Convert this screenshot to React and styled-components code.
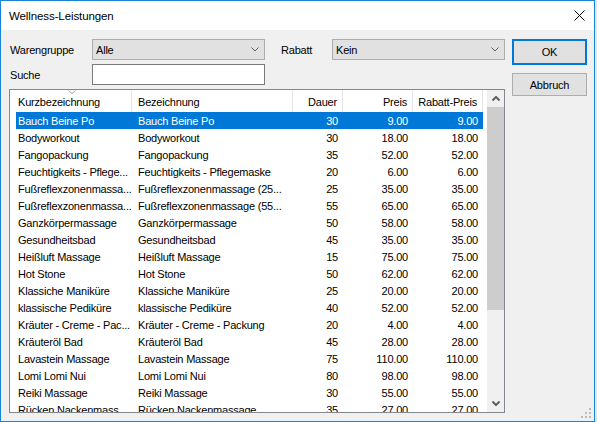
import React from 'react';
import styled, { createGlobalStyle } from 'styled-components';

const GlobalStyle = createGlobalStyle`
  html, body { margin: 0; padding: 0; }
  body {
    background: #dfe6ee;
    font-family: "Liberation Sans", Arial, sans-serif;
    font-size: 11px;
    letter-spacing: -0.2px;
    color: #000;
  }
`;

const rows = [
  ['Bauch Beine Po', 'Bauch Beine Po', '30', '9.00', '9.00'],
  ['Bodyworkout', 'Bodyworkout', '30', '18.00', '18.00'],
  ['Fangopackung', 'Fangopackung', '35', '52.00', '52.00'],
  ['Feuchtigkeits - Pflege...', 'Feuchtigkeits - Pflegemaske', '20', '6.00', '6.00'],
  ['Fußreflexzonenmassa...', 'Fußreflexzonenmassage (25...', '25', '35.00', '35.00'],
  ['Fußreflexzonenmassa...', 'Fußreflexzonenmassage (55...', '55', '65.00', '65.00'],
  ['Ganzkörpermassage', 'Ganzkörpermassage', '50', '58.00', '58.00'],
  ['Gesundheitsbad', 'Gesundheitsbad', '45', '35.00', '35.00'],
  ['Heißluft Massage', 'Heißluft Massage', '15', '75.00', '75.00'],
  ['Hot Stone', 'Hot Stone', '50', '62.00', '62.00'],
  ['Klassiche Maniküre', 'Klassiche Maniküre', '25', '20.00', '20.00'],
  ['klassische Pediküre', 'klassische Pediküre', '40', '52.00', '52.00'],
  ['Kräuter - Creme - Pac...', 'Kräuter - Creme - Packung', '20', '4.00', '4.00'],
  ['Kräuteröl Bad', 'Kräuteröl Bad', '45', '28.00', '28.00'],
  ['Lavastein Massage', 'Lavastein Massage', '75', '110.00', '110.00'],
  ['Lomi Lomi Nui', 'Lomi Lomi Nui', '80', '98.00', '98.00'],
  ['Reiki Massage', 'Reiki Massage', '30', '55.00', '55.00'],
  ['Rücken Nackenmass...', 'Rücken Nackenmassage', '35', '27.00', '27.00'],
];

const Window = styled.div`
  position: relative;
  width: 595px;
  height: 422px;
  box-sizing: border-box;
  border: 1px solid #1883d7;
  background: #f0f0f0;
  display: flex;
  flex-direction: column;
`;

const TitleBar = styled.div`
  height: 29px;
  background: #fff;
  display: flex;
  align-items: center;
  justify-content: space-between;
  padding: 0 9px 0 8px;
`;

const Title = styled.span`
  font-size: 11.5px;
  letter-spacing: -0.1px;
`;

const Body = styled.div`
  flex: 1;
  display: flex;
  gap: 7px;
  padding: 9px 0 8px 8px;
`;

const LeftCol = styled.div`
  width: 496px;
  display: flex;
  flex-direction: column;
  gap: 4px;
`;

const FormRow = styled.div`
  display: flex;
  align-items: center;
  height: 21px;
`;

const Label = styled.span`
  width: ${p => p.$w}px;
  margin-left: ${p => p.$ml || 0}px;
  padding-left: 1px;
  box-sizing: border-box;
`;

const Combo = styled.div`
  width: 173px;
  height: 21px;
  box-sizing: border-box;
  border: 1px solid #adadad;
  background: #e1e1e1;
  display: flex;
  align-items: center;
  justify-content: space-between;
  padding: 0 5px 0 3px;
`;

const Input = styled.div`
  width: 173px;
  height: 21px;
  box-sizing: border-box;
  border: 1px solid #7a7a7a;
  background: #fff;
`;

const ListBox = styled.div`
  height: 324px;
  box-sizing: border-box;
  border: 1px solid #828790;
  background: #fff;
  display: flex;
`;

const ListContent = styled.div`
  flex: 1;
  overflow: hidden;
  display: flex;
  flex-direction: column;
`;

const Header = styled.div`
  position: relative;
  height: 22px;
  flex: none;
  display: grid;
  grid-template-columns: 122px 161px 50px 70px 70px 1fr;
`;

const HeadCell = styled.div`
  display: flex;
  align-items: center;
  padding-top: 1px;
  justify-content: ${p => (p.$right ? 'flex-end' : 'flex-start')};
  padding-left: ${p => p.$pl || 0}px;
  padding-right: ${p => (p.$right ? 5 : 0)}px;
  border-right: ${p => (p.$last ? 'none' : '1px solid #e5e5e5')};
  white-space: nowrap;
`;

const SortMark = styled.svg`
  position: absolute;
  left: 58px;
  top: 0;
`;

const Row = styled.div`
  height: 17px;
  flex: none;
  width: 467px;
  margin-left: 6px;
  display: grid;
  grid-template-columns: 116px 161px 50px 70px 70px;
  align-items: center;
  background: ${p => (p.$selected ? '#0078d7' : 'transparent')};
  color: ${p => (p.$selected ? '#fff' : '#000')};
`;

const Cell = styled.div`
  white-space: nowrap;
  text-align: ${p => (p.$right ? 'right' : 'left')};
  padding-left: ${p => p.$pl || 0}px;
  padding-right: ${p => (p.$right ? 5 : 0)}px;
`;

const ScrollBar = styled.div`
  width: 17px;
  background: #f0f0f0;
  display: flex;
  flex-direction: column;
`;

const ScrollBtn = styled.div`
  height: 17px;
  flex: none;
  display: flex;
  align-items: center;
  justify-content: center;
`;

const Thumb = styled.div`
  height: 203px;
  background: #cdcdcd;
`;

const Spacer = styled.div`
  flex: 1;
`;

const ButtonCol = styled.div`
  width: 75px;
  display: flex;
  flex-direction: column;
  gap: 8px;
`;

const Button = styled.div`
  height: ${p => (p.$default ? 26 : 23)}px;
  box-sizing: border-box;
  border: ${p => (p.$default ? '2px solid #0078d7' : '1px solid #adadad')};
  background: #e1e1e1;
  display: flex;
  align-items: center;
  justify-content: center;
`;

const Grip = styled.svg`
  position: absolute;
  right: 2px;
  bottom: 2px;
`;

const Chevron = ({ up, color = '#606060', sw = 1 }) => (
  <svg width="8" height="5" viewBox="0 0 8 5">
    <path d={up ? 'M0.5 4.5 L4 1 L7.5 4.5' : 'M0.5 0.5 L4 4 L7.5 0.5'} fill="none" stroke={color} strokeWidth={sw} />
  </svg>
);

export default function App() {
  return (
    <>
      <GlobalStyle />
      <Window>
        <TitleBar>
          <Title>Wellness-Leistungen</Title>
          <svg width="11" height="11" viewBox="0 0 11 11">
            <path d="M0.5 0.5 L10.5 10.5 M10.5 0.5 L0.5 10.5" stroke="#000" strokeWidth="1" />
          </svg>
        </TitleBar>
        <Body>
          <LeftCol>
            <FormRow>
              <Label $w={83}>Warengruppe</Label>
              <Combo>
                <span>Alle</span>
                <Chevron />
              </Combo>
              <Label $w={52} $ml={15}>Rabatt</Label>
              <Combo>
                <span>Kein</span>
                <Chevron />
              </Combo>
            </FormRow>
            <FormRow>
              <Label $w={83}>Suche</Label>
              <Input />
            </FormRow>
            <ListBox>
              <ListContent>
                <Header>
                  <HeadCell $pl={8}>Kurzbezeichnung</HeadCell>
                  <HeadCell $pl={6}>Bezeichnung</HeadCell>
                  <HeadCell $right>Dauer</HeadCell>
                  <HeadCell $right>Preis</HeadCell>
                  <HeadCell $right>Rabatt-Preis</HeadCell>
                  <HeadCell $last />
                  <SortMark width="8" height="4" viewBox="0 0 8 4">
                    <path d="M0.5 0.5 L4 3.5 L7.5 0.5" fill="none" stroke="#a0a0a0" strokeWidth="1" />
                  </SortMark>
                </Header>
                {rows.map((r, i) => (
                  <Row key={i} $selected={i === 0}>
                    <Cell $pl={2}>{r[0]}</Cell>
                    <Cell $pl={6}>{r[1]}</Cell>
                    <Cell $right>{r[2]}</Cell>
                    <Cell $right>{r[3]}</Cell>
                    <Cell $right>{r[4]}</Cell>
                  </Row>
                ))}
              </ListContent>
              <ScrollBar>
                <ScrollBtn>
                  <Chevron up sw={2} />
                </ScrollBtn>
                <Thumb />
                <Spacer />
                <ScrollBtn>
                  <Chevron sw={2} />
                </ScrollBtn>
              </ScrollBar>
            </ListBox>
          </LeftCol>
          <ButtonCol>
            <Button $default>OK</Button>
            <Button>Abbruch</Button>
          </ButtonCol>
        </Body>
        <Grip width="11" height="11" viewBox="0 0 11 11">
          <g fill="#bcbcbc">
            <rect x="8" y="0" width="2" height="2" />
            <rect x="4" y="4" width="2" height="2" />
            <rect x="8" y="4" width="2" height="2" />
            <rect x="0" y="8" width="2" height="2" />
            <rect x="4" y="8" width="2" height="2" />
            <rect x="8" y="8" width="2" height="2" />
          </g>
        </Grip>
      </Window>
    </>
  );
}
